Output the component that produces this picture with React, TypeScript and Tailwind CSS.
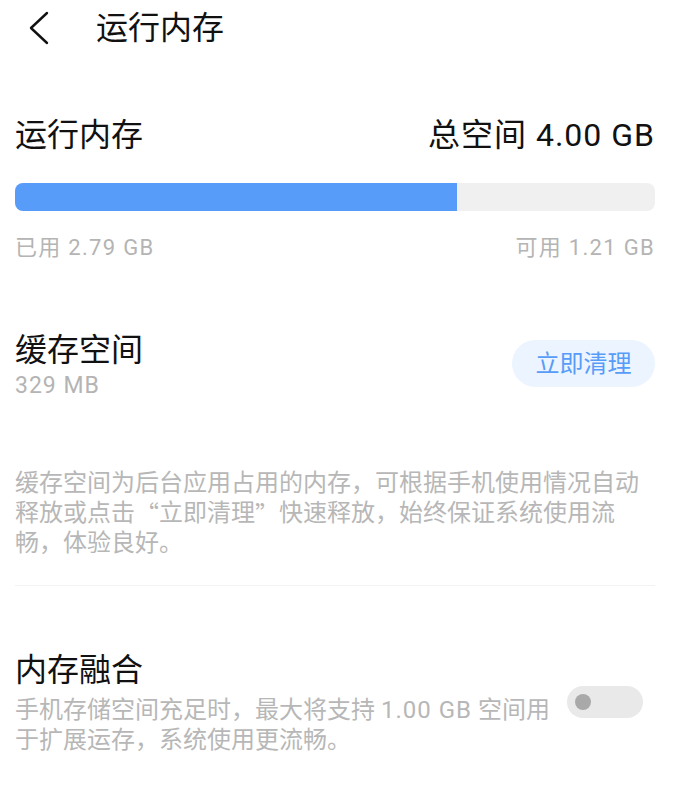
import React, { useState } from 'react';

const FONT = "font-['Roboto','Noto_Sans_CJK_SC',sans-serif]";

const Toggle = ({ on, onChange }: { on: boolean; onChange: (v: boolean) => void }) => (
  <button
    onClick={() => onChange(!on)}
    className={`flex items-center w-[76px] h-[32px] rounded-full px-[8px] ${on ? 'bg-[#5a9cf8] justify-end' : 'bg-[#e9e9e9] justify-start'}`}
  >
    <span className={`block w-[16px] h-[16px] rounded-full ${on ? 'bg-white' : 'bg-[#a9a9a9]'}`}></span>
  </button>
);

// full-width CJK quotation marks
const Q = ({ children }: { children: React.ReactNode }) => (
  <span className="align-top font-['Noto_Sans_CJK_SC',sans-serif] [font-feature-settings:'fwid']">{children}</span>
);

export default function App() {
  const [fusion, setFusion] = useState(false);
  const total = 4.0;
  const used = 2.79;
  const pct = (used / total) * 100 - 0.7;

  return (
    <div className={`w-[682px] min-h-[810px] bg-white ${FONT}`}>
      {/* Header */}
      <div className="h-[56px] flex items-center">
        <svg className="ml-[28px]" width="22" height="34" viewBox="0 0 22 34" fill="none">
          <path d="M19 2 L3 17 L19 32" stroke="#111" strokeWidth="2.4" strokeLinecap="round" strokeLinejoin="round" />
        </svg>
        <h1 className="ml-[46px] text-[32px] leading-[40px] text-[#111]">运行内存</h1>
      </div>

      <div className="pl-[15px] pr-[27px]">
        {/* RAM */}
        <div className="mt-[59px] flex items-center justify-between">
          <span className="text-[32px] leading-[40px] text-[#111]">运行内存</span>
          <span className="text-[32px] leading-[40px] tracking-[1px] text-[#111]">总空间 4.00 GB</span>
        </div>

        <div className="mt-[28px] h-[28px] rounded-[8px] bg-[#f0f0f0] overflow-hidden">
          <div className="h-full bg-[#579cf9]" style={{ width: `${pct}%` }}></div>
        </div>

        <div className="mt-[22px] flex justify-between text-[22px] leading-[30px] tracking-[1.3px] text-[#b4b4b4]">
          <span>已用 2.79 GB</span>
          <span>可用 1.21 GB</span>
        </div>

        {/* Cache */}
        <div className="mt-[67px] flex items-start justify-between">
          <div>
            <div className="text-[32px] leading-[40px] text-[#111]">缓存空间</div>
            <div className="mt-[1px] text-[23px] leading-[30px] tracking-[1px] text-[#b4b4b4]">329 MB</div>
          </div>
          <button className="mt-[10px] w-[143px] h-[47px] rounded-full bg-[#ecf4ff] text-[#579cf9] text-[24px]">
            立即清理
          </button>
        </div>

        <p className="mt-[67px] h-[90px] text-[24px] leading-[30px] text-[#b7b7b7]">
          缓存空间为后台应用占用的内存，可根据手机使用情况自动
          <br />
          释放或点击<Q>“</Q>立即清理<Q>”</Q>快速释放，始终保证系统使用流
          <br />
          畅，体验良好。
        </p>

        <div className="mt-[27px] h-px bg-[#f3f3f3]"></div>

        {/* Memory fusion */}
        <div className="mt-[64px] flex items-start justify-between gap-[4px]">
          <div className="flex-1 min-w-0">
            <div className="text-[32px] leading-[40px] text-[#111]">内存融合</div>
            <p className="mt-[5px] text-[24px] leading-[30px] text-[#b7b7b7] whitespace-nowrap">
              手机存储空间充足时，最大将支持 <span className="tracking-[1px]">1.00 GB</span> 空间用
              <br />
              于扩展运存，系统使用更流畅。
            </p>
          </div>
          <div className="mt-[36px] mr-[12px]">
            <Toggle on={fusion} onChange={setFusion} />
          </div>
        </div>
      </div>
    </div>
  );
}
